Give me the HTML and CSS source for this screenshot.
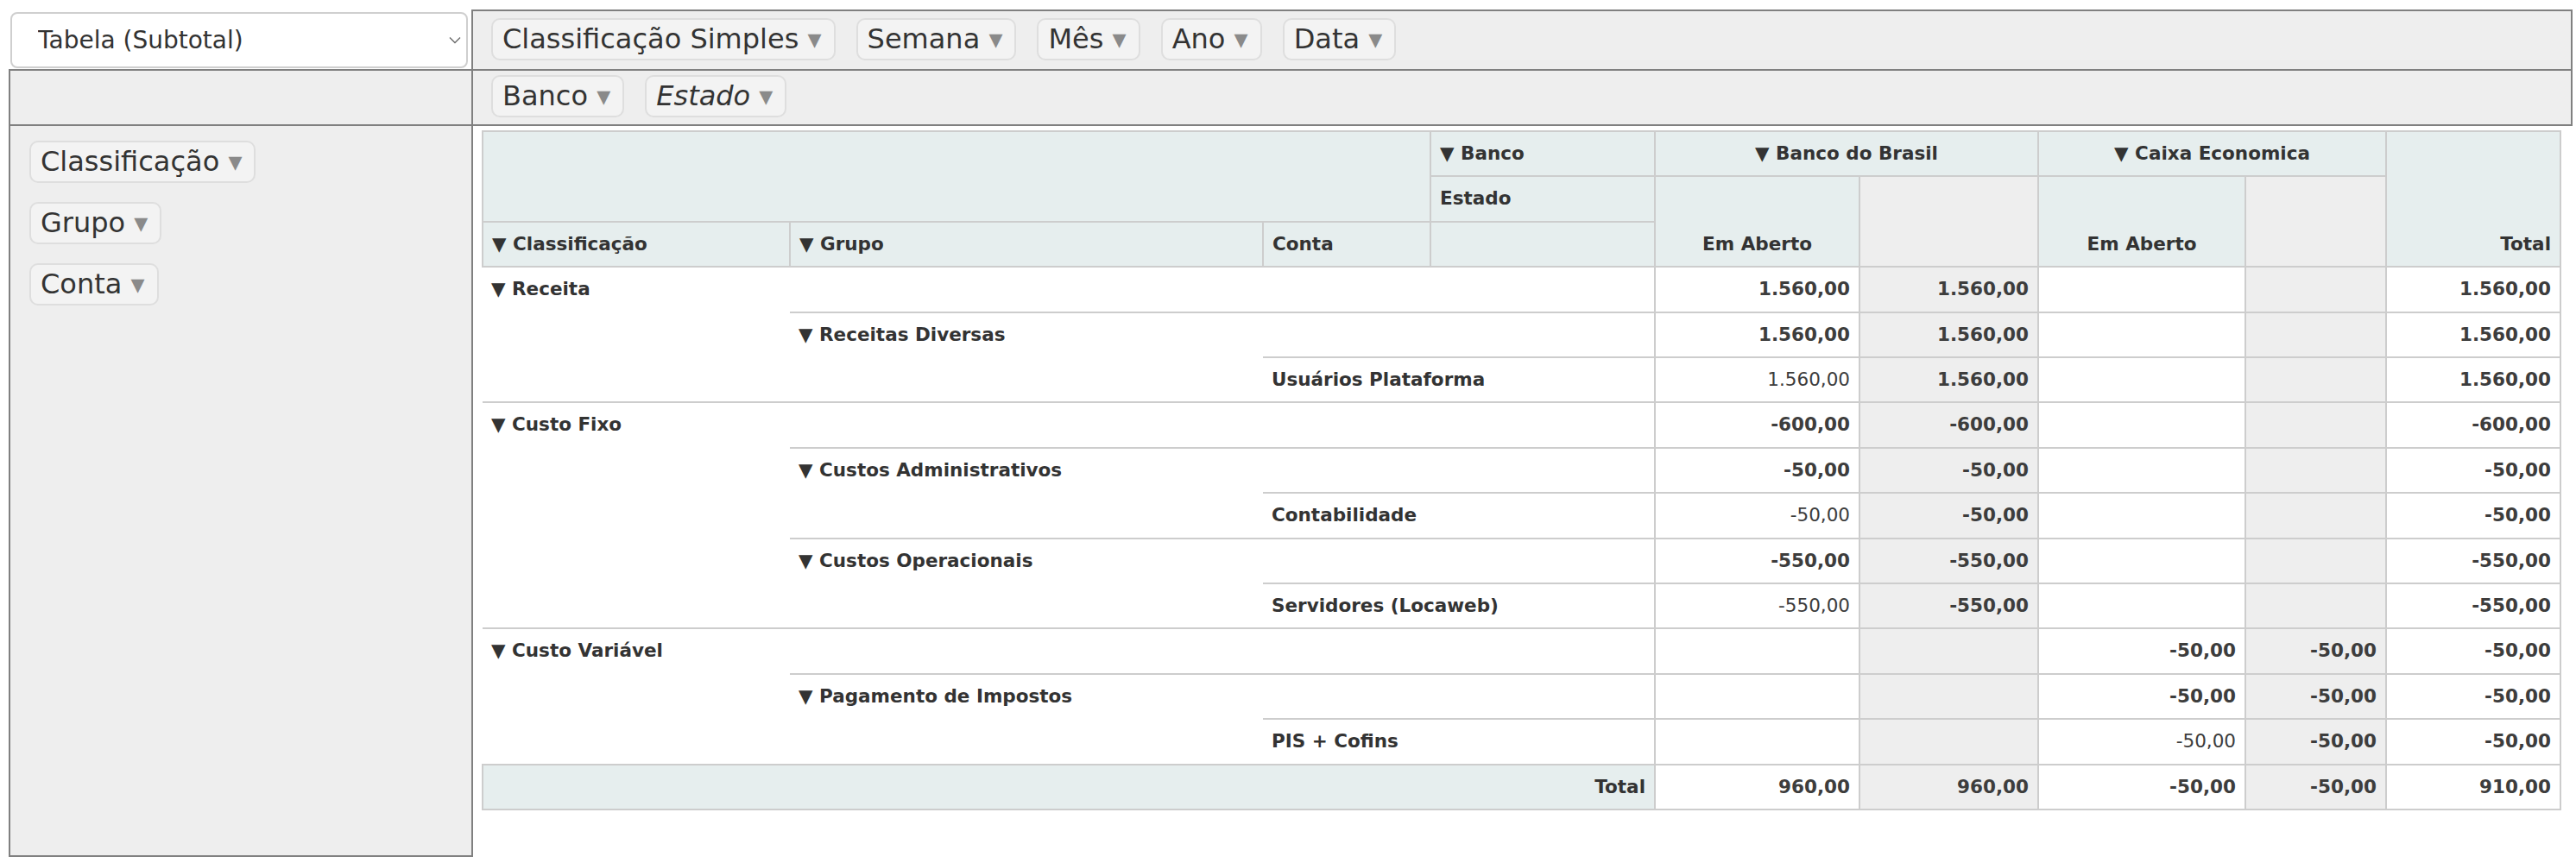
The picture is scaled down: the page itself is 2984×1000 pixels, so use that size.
FILE: index.html
```html
<!DOCTYPE html>
<html lang="pt-BR">
<head>
    <meta charset="UTF-8">
    <title>Tabela Dinâmica</title>
    <link rel="stylesheet" href="styles.css">
</head>
<body>

<table class="pvt-ui">
    <colgroup>
        <col class="side-col">
        <col>
    </colgroup>
    <tr class="ui-top">
        <td class="pvt-renderer">
            <div class="select-wrap">
                <select class="renderer-select">
                    <option>Tabela (Subtotal)</option>
                </select>
                <svg class="select-arrow" width="14" height="9" viewBox="0 0 14 9"><path d="M1 1.5l6 6 6-6" fill="none" stroke="#6b6b6b" stroke-width="1.4"/></svg>
            </div>
        </td>
        <td class="pvt-axis">
            <ul class="axis-list horiz">
                <li><span class="attr">Classificação Simples<span class="tri"> ▾</span></span></li>
                <li><span class="attr">Semana<span class="tri"> ▾</span></span></li>
                <li><span class="attr">Mês<span class="tri"> ▾</span></span></li>
                <li><span class="attr">Ano<span class="tri"> ▾</span></span></li>
                <li><span class="attr">Data<span class="tri"> ▾</span></span></li>
            </ul>
        </td>
    </tr>
    <tr class="ui-mid">
        <td class="pvt-axis pvt-vals"></td>
        <td class="pvt-axis">
            <ul class="axis-list horiz">
                <li><span class="attr">Banco<span class="tri"> ▾</span></span></li>
                <li><span class="attr filtered">Estado<span class="tri"> ▾</span></span></li>
            </ul>
        </td>
    </tr>
    <tr class="ui-main">
        <td class="pvt-axis pvt-rows">
            <ul class="axis-list vert">
                <li><span class="attr">Classificação<span class="tri"> ▾</span></span></li>
                <li><span class="attr">Grupo<span class="tri"> ▾</span></span></li>
                <li><span class="attr">Conta<span class="tri"> ▾</span></span></li>
            </ul>
        </td>
        <td class="pvt-output">
            <table class="pvt-table">
                <colgroup>
                    <col style="width:356px"><col style="width:548px"><col style="width:194px">
                    <col style="width:260px"><col style="width:237px"><col style="width:207px">
                    <col style="width:240px"><col style="width:163px"><col style="width:202px">
                </colgroup>
                <thead>
                    <tr>
                        <th colspan="3" rowspan="2"></th>
                        <th>▼ Banco</th>
                        <th colspan="2" class="col-label">▼ Banco do Brasil</th>
                        <th colspan="2" class="col-label">▼ Caixa Economica</th>
                        <th rowspan="3" class="total-label">Total</th>
                    </tr>
                    <tr>
                        <th>Estado</th>
                        <th rowspan="2" class="col-label bottom">Em Aberto</th>
                        <th rowspan="2" class="sub"></th>
                        <th rowspan="2" class="col-label bottom">Em Aberto</th>
                        <th rowspan="2" class="sub"></th>
                    </tr>
                    <tr>
                        <th>▼ Classificação</th>
                        <th>▼ Grupo</th>
                        <th>Conta</th>
                        <th></th>
                    </tr>
                </thead>
                <tbody>
                    <tr>
                        <th rowspan="3">▼ Receita</th>
                        <th colspan="3"></th>
                        <td class="b">1.560,00</td><td class="sub b">1.560,00</td><td></td><td class="sub"></td><td class="b">1.560,00</td>
                    </tr>
                    <tr>
                        <th rowspan="2">▼ Receitas Diversas</th>
                        <th colspan="2"></th>
                        <td class="b">1.560,00</td><td class="sub b">1.560,00</td><td></td><td class="sub"></td><td class="b">1.560,00</td>
                    </tr>
                    <tr>
                        <th colspan="2">Usuários Plataforma</th>
                        <td>1.560,00</td><td class="sub b">1.560,00</td><td></td><td class="sub"></td><td class="b">1.560,00</td>
                    </tr>
                    <tr>
                        <th rowspan="5">▼ Custo Fixo</th>
                        <th colspan="3"></th>
                        <td class="b">-600,00</td><td class="sub b">-600,00</td><td></td><td class="sub"></td><td class="b">-600,00</td>
                    </tr>
                    <tr>
                        <th rowspan="2">▼ Custos Administrativos</th>
                        <th colspan="2"></th>
                        <td class="b">-50,00</td><td class="sub b">-50,00</td><td></td><td class="sub"></td><td class="b">-50,00</td>
                    </tr>
                    <tr>
                        <th colspan="2">Contabilidade</th>
                        <td>-50,00</td><td class="sub b">-50,00</td><td></td><td class="sub"></td><td class="b">-50,00</td>
                    </tr>
                    <tr>
                        <th rowspan="2">▼ Custos Operacionais</th>
                        <th colspan="2"></th>
                        <td class="b">-550,00</td><td class="sub b">-550,00</td><td></td><td class="sub"></td><td class="b">-550,00</td>
                    </tr>
                    <tr>
                        <th colspan="2">Servidores (Locaweb)</th>
                        <td>-550,00</td><td class="sub b">-550,00</td><td></td><td class="sub"></td><td class="b">-550,00</td>
                    </tr>
                    <tr>
                        <th rowspan="3">▼ Custo Variável</th>
                        <th colspan="3"></th>
                        <td></td><td class="sub"></td><td class="b">-50,00</td><td class="sub b">-50,00</td><td class="b">-50,00</td>
                    </tr>
                    <tr>
                        <th rowspan="2">▼ Pagamento de Impostos</th>
                        <th colspan="2"></th>
                        <td></td><td class="sub"></td><td class="b">-50,00</td><td class="sub b">-50,00</td><td class="b">-50,00</td>
                    </tr>
                    <tr>
                        <th colspan="2">PIS + Cofins</th>
                        <td></td><td class="sub"></td><td>-50,00</td><td class="sub b">-50,00</td><td class="b">-50,00</td>
                    </tr>
                    <tr class="grand">
                        <th colspan="4" class="total-label">Total</th>
                        <td class="b">960,00</td><td class="sub b">960,00</td><td class="b">-50,00</td><td class="sub b">-50,00</td><td class="b">910,00</td>
                    </tr>
                </tbody>
            </table>
        </td>
    </tr>
</table>

</body>
</html>
```

FILE: styles.css
```css
* {
    box-sizing: border-box;
}
body {
    margin: 11px 4px 0 10px;
    background: #fff;
    font-family: "DejaVu Sans", Verdana, sans-serif;
    color: #333;
}

/* outer pivot ui */
.pvt-ui {
    border-collapse: collapse;
    table-layout: fixed;
    width: 2970px;
}
.side-col { width: 536px; }
.pvt-ui > tbody > tr > td {
    padding: 0;
    vertical-align: top;
}
.ui-top { height: 69px; }
.ui-mid { height: 61px; }
.ui-main { height: 847px; }

.pvt-renderer {
    background: #fff;
}
.select-wrap {
    position: relative;
    width: 530px;
    margin: 2px 0 0 1px;
}
.renderer-select {
    display: block;
    width: 100%;
    height: 65px;
    appearance: none;
    -webkit-appearance: none;
    background: #fff;
    border: 2px solid #cfcfcf;
    border-radius: 8px;
    padding: 0 0 0 30px;
    font-family: "DejaVu Sans", Verdana, sans-serif;
    font-size: 28px;
    color: #333;
}
.select-arrow {
    position: absolute;
    right: 8px;
    top: 28px;
}

.pvt-axis {
    border: 2px solid #808080;
    background: #eee;
}
.axis-list {
    list-style: none;
    margin: 0;
    padding: 8px 10px;
}
.axis-list.horiz {
    display: flex;
    gap: 2px;
}
.ui-mid .axis-list.horiz {
    padding-top: 5px;
}
.axis-list li {
    padding: 0 11px;
}
.axis-list.vert {
    padding-top: 6px;
}
.axis-list.vert li {
    padding: 11px 12px;
    display: flex;
}
.attr {
    display: inline-block;
    background: #f3f3f3;
    border: 2px solid #dedede;
    border-radius: 10px;
    padding: 4px 14px 4px 11px;
    font-size: 32px;
    line-height: 37px;
    white-space: nowrap;
    color: #333;
}
.attr.filtered {
    font-style: italic;
}
.tri {
    color: #8a8a8a;
    font-style: normal;
}

/* rendered table */
.pvt-output {
    padding: 5px 10px !important;
}
.pvt-table {
    border-collapse: collapse;
    table-layout: fixed;
    width: 2407px;
    font-size: 21.5px;
    line-height: 30.4px;
}
.pvt-table th,
.pvt-table td {
    border: 2px solid #cdcdcd;
    padding: 10px 10px;
    white-space: nowrap;
    overflow: hidden;
}
.pvt-table th {
    background: #e6eeee;
    color: #333;
    font-weight: bold;
    text-align: left;
}
.pvt-table .col-label {
    text-align: center;
}
.pvt-table .bottom,
.pvt-table .total-label {
    vertical-align: bottom;
}
.pvt-table .total-label {
    text-align: right;
}
.pvt-table tbody th {
    background: #fff;
    border-left: none;
    border-right: none;
    vertical-align: top;
}
.pvt-table tbody .grand th {
    background: #e6eeee;
    border-left: 2px solid #cdcdcd;
}
.pvt-table td {
    background: #fff;
    color: #3d3d3d;
    text-align: right;
    vertical-align: top;
}
.pvt-table .sub {
    background: #eee;
}
.pvt-table .b {
    font-weight: bold;
}
```
